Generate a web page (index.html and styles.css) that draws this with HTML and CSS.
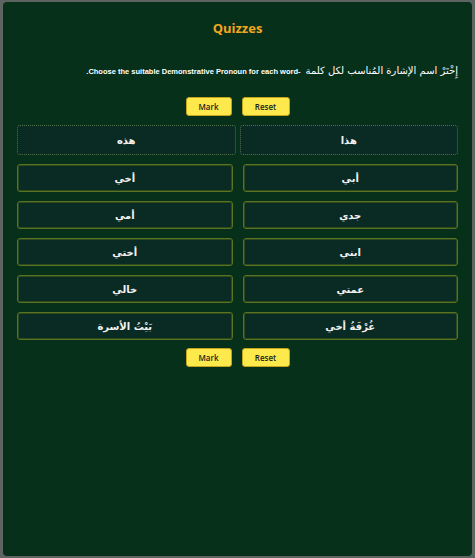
FILE: index.html
```html
<!DOCTYPE html>
<html lang="ar">
<head>
<meta charset="utf-8">
<title>Quizzes</title>
<link rel="stylesheet" href="styles.css">
</head>
<body>
<div class="panel">
  <h1 class="title">Quizzes</h1>
  <p class="instr" dir="rtl"><span class="ar">إِخْتَرْ اسم الإشارة المُناسب لكل كلمة</span> <span class="en">-Choose the suitable Demonstrative Pronoun for each word.</span></p>
  <div class="btns">
    <button class="btn btn-mark">Mark</button>
    <button class="btn btn-reset">Reset</button>
  </div>
  <div class="drops" dir="rtl">
    <div class="drop">هذا</div>
    <div class="drop">هذه</div>
  </div>
  <div class="words" dir="rtl">
    <div class="word">أبي</div>
    <div class="word">أخي</div>
    <div class="word">جدي</div>
    <div class="word">أمي</div>
    <div class="word">ابني</div>
    <div class="word">أختي</div>
    <div class="word">عمتي</div>
    <div class="word">خالي</div>
    <div class="word">غُرْفَةُ أخي</div>
    <div class="word">بَيْتُ الأسرة</div>
  </div>
  <div class="btns btns-bottom">
    <button class="btn btn-mark">Mark</button>
    <button class="btn btn-reset">Reset</button>
  </div>
</div>
</body>
</html>
```
FILE: styles.css
```css
html, body {
  margin: 0;
  padding: 0;
}
body {
  background: #5d6563;
  width: 475px;
  height: 558px;
  overflow: hidden;
  font-family: "DejaVu Sans", "Noto Sans", sans-serif;
}
.panel {
  margin: 2px 3px;
  height: 554px;
  box-sizing: border-box;
  background: #07301b;
  border-radius: 4px;
  padding: 0 14px;
  display: flex;
  flex-direction: column;
}
.title {
  margin: 16px 0 0;
  font-family: "Open Sans", sans-serif;
  font-size: 13px;
  line-height: 20px;
  font-weight: bold;
  color: #f2a51f;
  text-align: center;
}
.instr {
  margin: 21px 0 0;
  line-height: 20px;
  color: #ffffff;
  text-align: right;
  white-space: nowrap;
}
.instr .ar {
  font-family: "DejaVu Sans", sans-serif;
  font-size: 10px;
}
.instr .en {
  font-family: "Liberation Sans", sans-serif;
  font-size: 7.5px;
  font-weight: bold;
}
.btns {
  margin-top: 15px;
  display: flex;
  justify-content: center;
  gap: 10px;
}
.btns-bottom {
  margin-top: 8px;
}
.btn {
  height: 19px;
  box-sizing: border-box;
  padding: 0;
  background: #fde94c;
  border: 1px solid #c2a51a;
  border-radius: 3px;
  font-family: "Open Sans", sans-serif;
  font-size: 8px;
  font-weight: 600;
  color: #1d1d1d;
}
.btn-mark { width: 46px; }
.btn-reset { width: 48px; }
.drops {
  margin-top: 9px;
  display: grid;
  grid-template-columns: 1fr 1fr;
  gap: 4px;
}
.drop {
  height: 30px;
  box-sizing: border-box;
  border: 1px dotted #56704c;
  border-radius: 3px;
  background: #0a2a24;
  color: #f2f2f2;
  font-size: 10px;
  font-weight: bold;
  display: flex;
  align-items: center;
  justify-content: center;
}
.words {
  margin-top: 9px;
  display: grid;
  grid-template-columns: 1fr 1fr;
  column-gap: 10px;
  row-gap: 9px;
}
.word {
  height: 28px;
  box-sizing: border-box;
  border: 1px solid #5a7322;
  box-shadow: inset 0 0 0 1px #2e4a1c;
  border-radius: 3px;
  background: #0a2a24;
  color: #f2f2f2;
  font-size: 10px;
  font-weight: bold;
  display: flex;
  align-items: center;
  justify-content: center;
}
```
